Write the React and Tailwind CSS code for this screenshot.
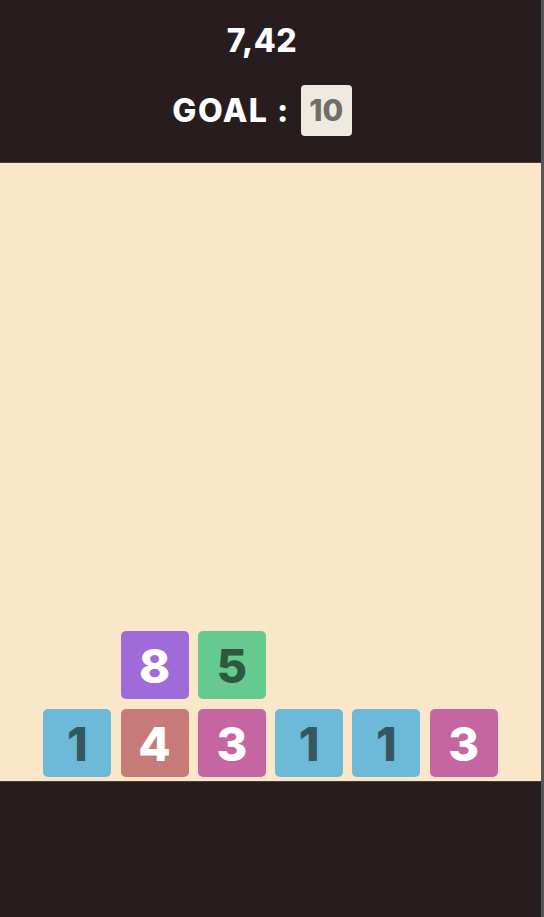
import React from 'react';

const font = { fontFamily: 'Inter, "Open Sans", sans-serif' };

// tile colours keyed by value
const TILE_STYLES = {
  1: 'bg-[#6cbad8] text-[#345762]',
  3: 'bg-[#c566a2] text-white',
  4: 'bg-[#c67b79] text-white',
  5: 'bg-[#66c98f] text-[#2d5a3f]',
  8: 'bg-[#9f6bd9] text-white',
};

const board = [
  [null, 8, 5, null, null, null],
  [1, 4, 3, 1, 1, 3],
];

function Tile({ value }) {
  if (value == null) return <div className="w-[68px] h-[68px]" />;
  return (
    <div
      className={`w-[68px] h-[68px] rounded-[5px] flex items-center justify-center text-[47px] font-extrabold leading-none ${TILE_STYLES[value]}`}
    >
      {value}
    </div>
  );
}

export default function App() {
  return (
    <div className="flex w-[544px] h-[917px] bg-[#271d1e]" style={font}>
      <div className="w-[541px] flex flex-col">
        {/* header: timer + goal */}
        <div className="h-[162px] pr-[17px] flex flex-col items-center text-white font-extrabold">
          <div className="mt-[22px] text-[32px] leading-[38px] tracking-[0.5px]">7,42</div>
          <div className="mt-[25px] flex items-center gap-[11px]">
            <span className="text-[32px] leading-none tracking-[1.5px]">GOAL :</span>
            <span className="w-[51px] h-[51px] rounded-[4px] bg-[#eeeadf] text-[#6e6d67] text-[30px] flex items-center justify-center">
              10
            </span>
          </div>
        </div>

        {/* playfield */}
        <div className="h-[619px] bg-[#fae6c8] border-t border-[#4a3d35] flex flex-col justify-end items-center pb-[4px]">
          <div className="grid grid-cols-6 gap-x-[9.3px] gap-y-[10px]">
            {board.map((row, r) =>
              row.map((v, c) => <Tile key={`${r}-${c}`} value={v} />)
            )}
          </div>
        </div>

        <div className="flex-1 border-t border-[#4a3d35]" />
      </div>
      <div className="w-[3px] bg-[#565656]" />
    </div>
  );
}
